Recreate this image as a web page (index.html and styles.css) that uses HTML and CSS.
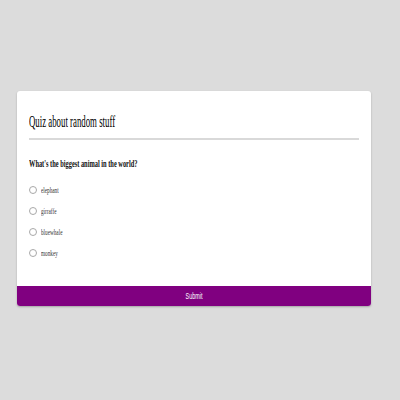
FILE: index.html
```html
<!DOCTYPE html>
<html>
<head>
<meta charset="utf-8">
<link rel="stylesheet" href="styles.css">
</head>
<body>
<div class="card">
  <div class="content">
    <h1 class="title"><span class="sq-title">Quiz about random stuff</span></h1>
    <h2 class="question"><span class="sq">What's the biggest animal in the world?</span></h2>
    <ul class="options">
      <li class="option"><span class="radio"></span><span class="sq">elephant</span></li>
      <li class="option"><span class="radio"></span><span class="sq">girraffe</span></li>
      <li class="option"><span class="radio"></span><span class="sq">bluewhale</span></li>
      <li class="option"><span class="radio"></span><span class="sq">monkey</span></li>
    </ul>
  </div>
  <div class="submit"><span class="sq-c">Submit</span></div>
</div>
</body>
</html>
```
FILE: styles.css
```css
html, body {
  margin: 0;
  padding: 0;
  background: #dcdcdc;
  width: 400px;
  height: 400px;
  overflow: hidden;
}
.card {
  margin: 91px 0 0 17px;
  width: 354px;
  background: #fff;
  border-radius: 3px;
  overflow: hidden;
  box-shadow: 0 1px 2px rgba(0,0,0,0.25);
  font-family: "Liberation Serif", serif;
  color: #111;
}
.content {
  padding: 22px 12px 23px 12px;
}
.sq {
  display: inline-block;
  transform: scaleX(0.58);
  transform-origin: left center;
  white-space: nowrap;
}
.sq-title {
  display: inline-block;
  transform: scaleX(0.55);
  transform-origin: left center;
  white-space: nowrap;
}
.sq-c {
  display: inline-block;
  transform: scaleX(0.6);
  transform-origin: center center;
  white-space: nowrap;
}
.title {
  margin: 0;
  font-size: 16px;
  font-weight: normal;
  line-height: 18px;
  padding-bottom: 7px;
  border-bottom: 2px solid #d9d9d9;
  color: #000;
}
.question {
  margin: 17px 0 0 0;
  font-size: 11px;
  font-weight: bold;
  line-height: 13px;
}
.options {
  list-style: none;
  margin: 9px 0 0 0;
  padding: 0;
}
.option {
  display: flex;
  align-items: center;
  height: 21px;
  font-size: 9px;
  color: #333;
}
.radio {
  width: 6px;
  height: 6px;
  border: 1px solid #a8a8a8;
  border-radius: 50%;
  margin: 0 4px 0 0;
  flex: none;
}
.submit {
  background: #800080;
  color: #fff;
  height: 20px;
  display: flex;
  align-items: center;
  justify-content: center;
  font-family: "Liberation Sans", sans-serif;
  font-size: 9px;
}
```
